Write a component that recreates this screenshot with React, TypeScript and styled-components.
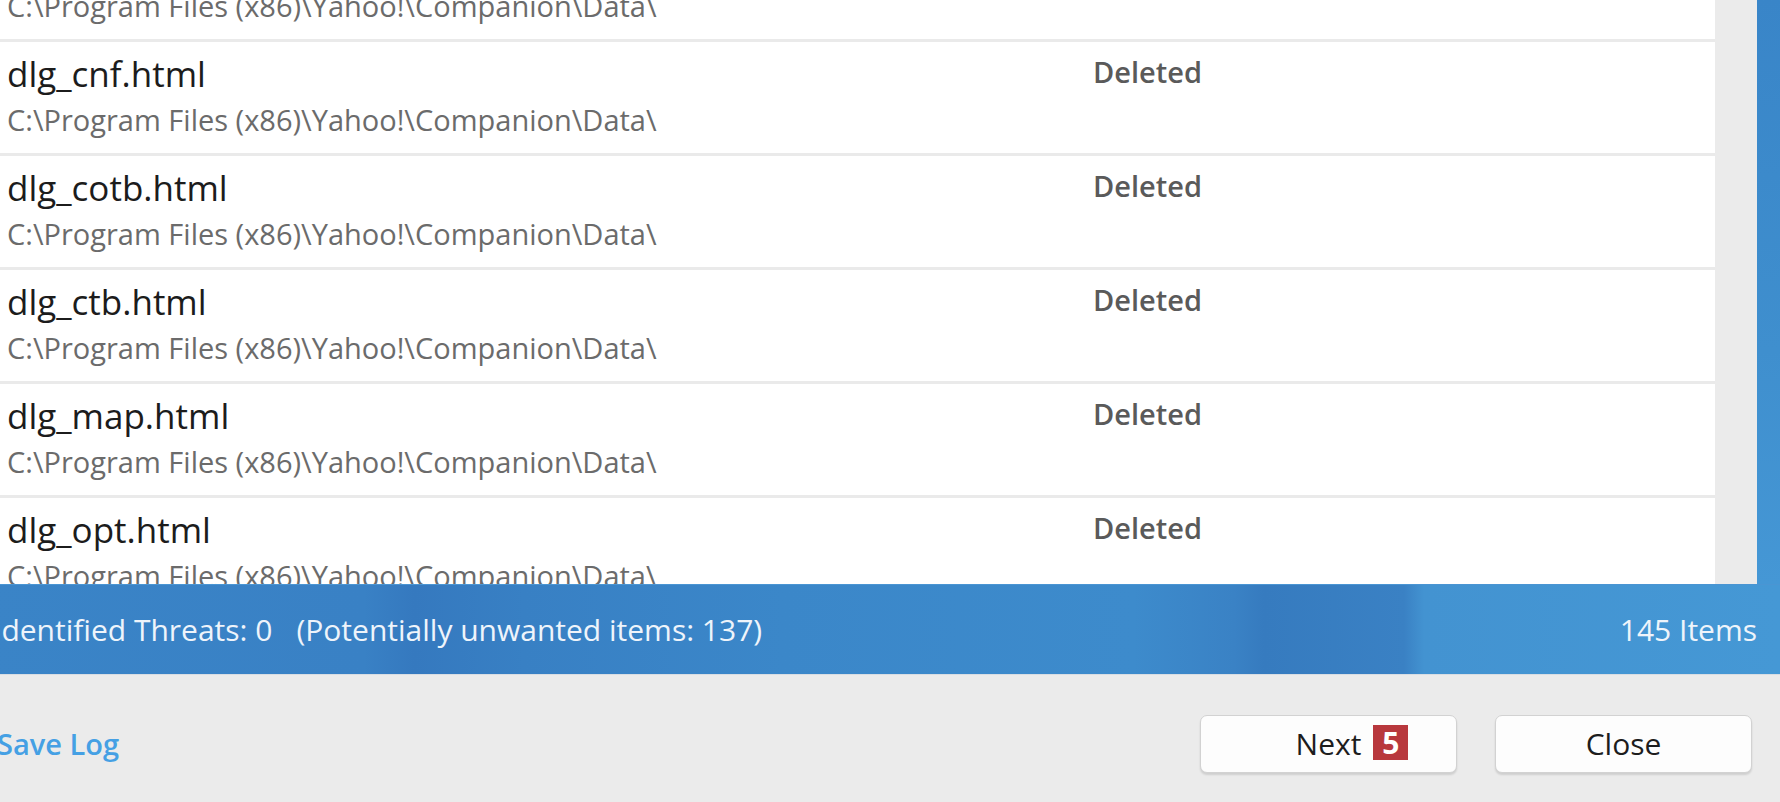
import React from "react";
import styled, { createGlobalStyle } from "styled-components";

const GlobalStyle = createGlobalStyle`
  html, body {
    margin: 0;
    padding: 0;
    background: #ebebeb;
    overflow: hidden;
  }
  body {
    font-family: "Open Sans", "Noto Sans", "Liberation Sans", sans-serif;
  }
`;

const Window = styled.div`
  display: flex;
  flex-direction: column;
  width: 1796px;
  height: 802px;
  margin-left: -16px;
  overflow: hidden;
`;

const Body = styled.div`
  display: flex;
  height: 584px;
  padding-right: 23px;
  background: linear-gradient(180deg, #3985c8 0%, #3f8fce 60%, #4597d5 100%);
`;

const ListPane = styled.div`
  flex: 1;
  overflow: hidden;
  background: #eaeaea;
`;

const List = styled.div`
  display: flex;
  flex-direction: column;
  gap: 3px;
  margin-top: -72px;
`;

const Row = styled.div`
  display: grid;
  grid-template-columns: 1086px 1fr;
  height: 111px;
  flex: none;
  padding: 12px 0 0 23px;
  box-sizing: border-box;
  background: #ffffff;
`;

const NameCell = styled.div`
  display: flex;
  flex-direction: column;
`;

const FileName = styled.div`
  font-size: 35px;
  line-height: 40px;
  color: #1c1c1c;
  white-space: nowrap;
`;

const FilePath = styled.div`
  margin-top: 9px;
  font-size: 29px;
  line-height: 34px;
  color: #6b6b6b;
  white-space: nowrap;
`;

const Status = styled.div`
  font-size: 29px;
  line-height: 36px;
  font-weight: 600;
  color: #5a5a5a;
`;

const ScrollTrack = styled.div`
  width: 42px;
  background: #ebebeb;
`;

const StatusBar = styled.div`
  display: flex;
  align-items: center;
  justify-content: space-between;
  height: 90px;
  padding: 0 23px 0 9px;
  box-sizing: border-box;
  color: #eef4fb;
  font-size: 30px;
  background: linear-gradient(
    90deg,
    #3a84c7 0px,
    #3981c5 380px,
    #3579bf 430px,
    #3880c4 540px,
    #3b87c9 800px,
    #3d8bcc 1150px,
    #3a82c5 1250px,
    #367bbf 1280px,
    #3a81c4 1420px,
    #4393d1 1440px,
    #4598d5 1796px
  );
  border-top: 1px solid #4a95d3;
`;

const StatusGroup = styled.div`
  display: flex;
  gap: 24px;
  white-space: nowrap;
`;

const Footer = styled.div`
  flex: 1;
  display: flex;
  align-items: flex-start;
  padding: 40px 28px 0 13px;
  background: #ebebeb;
  border-top: 1px solid #d8dde3;
`;

const SaveLog = styled.a`
  font-size: 29px;
  line-height: 58px;
  font-weight: 600;
  color: #45a0e4;
  text-decoration: none;
  cursor: pointer;
`;

const Buttons = styled.div`
  display: flex;
  gap: 38px;
  margin-left: auto;
`;

const Button = styled.button`
  width: 257px;
  height: 58px;
  display: flex;
  align-items: center;
  justify-content: center;
  font-family: "Open Sans", "Noto Sans", sans-serif;
  font-size: 30px;
  color: #1d1d1d;
  background: #fdfdfd;
  border: 1px solid #d2d2d2;
  border-radius: 7px;
  box-shadow: 0 2px 2px rgba(0, 0, 0, 0.12);
  padding: 0;
`;

const Label = styled.span`
  position: relative;
  line-height: 40px;
`;

const Badge = styled.span`
  position: absolute;
  left: calc(100% + 12px);
  top: 1px;
  width: 35px;
  height: 35px;
  display: flex;
  align-items: center;
  justify-content: center;
  background: #b8383d;
  color: #ffffff;
  font-size: 30px;
  font-weight: 700;
  line-height: 1;
`;

const PATH = "C:\\Program Files (x86)\\Yahoo!\\Companion\\Data\\";

const items = [
  "dlg_clr.html",
  "dlg_cnf.html",
  "dlg_cotb.html",
  "dlg_ctb.html",
  "dlg_map.html",
  "dlg_opt.html",
];

export default function App() {
  return (
    <>
      <GlobalStyle />
      <Window>
        <Body>
          <ListPane>
            <List>
              {items.map((name) => (
                <Row key={name}>
                  <NameCell>
                    <FileName>{name}</FileName>
                    <FilePath>{PATH}</FilePath>
                  </NameCell>
                  <Status>Deleted</Status>
                </Row>
              ))}
            </List>
          </ListPane>
          <ScrollTrack />
        </Body>
        <StatusBar>
          <StatusGroup>
            <span>Identified Threats: 0</span>
            <span>(Potentially unwanted items: 137)</span>
          </StatusGroup>
          <span>145 Items</span>
        </StatusBar>
        <Footer>
          <SaveLog>Save Log</SaveLog>
          <Buttons>
            <Button>
              <Label>
                Next
                <Badge>5</Badge>
              </Label>
            </Button>
            <Button>
              <Label>Close</Label>
            </Button>
          </Buttons>
        </Footer>
      </Window>
    </>
  );
}
